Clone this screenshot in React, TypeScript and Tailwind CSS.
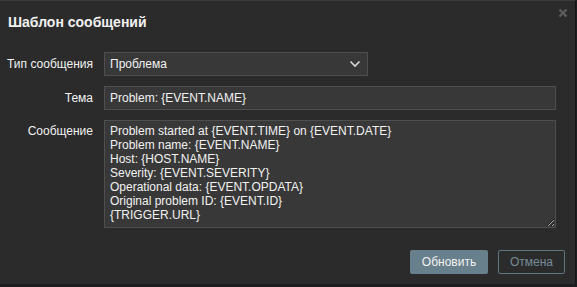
import React, { useState } from "react";

const message = `Problem started at {EVENT.TIME} on {EVENT.DATE}
Problem name: {EVENT.NAME}
Host: {HOST.NAME}
Severity: {EVENT.SEVERITY}
Operational data: {EVENT.OPDATA}
Original problem ID: {EVENT.ID}
{TRIGGER.URL}`;

function Chevron() {
  return (
    <svg width="12" height="8" viewBox="0 0 12 8" className="text-[#d9d9d9]">
      <path d="M1.5 1.5 L6 6 L10.5 1.5" fill="none" stroke="currentColor" strokeWidth="1.6" />
    </svg>
  );
}

export default function App() {
  const [subject, setSubject] = useState("Problem: {EVENT.NAME}");
  const [body, setBody] = useState(message);

  return (
    <div className="h-[287px] w-[577px] overflow-hidden bg-[#1b1d1f] font-['Liberation_Sans',Arial,sans-serif] text-[12px] text-[#f2f2f2]">
      <div className="relative flex h-[284px] w-[576px] flex-col border-r border-t border-[#3a3a3a] border-r-[#151515] bg-[#2b2b2b]">
        <button className="absolute right-[7px] top-[7px] text-[#5c5c5c]">
          <svg width="10" height="10" viewBox="0 0 10 10">
            <path d="M1.5 1.5 L8.5 8.5 M8.5 1.5 L1.5 8.5" stroke="currentColor" strokeWidth="2.4" />
          </svg>
        </button>

        <h2 className="pl-[8px] pt-[11px] text-[14px] font-bold leading-[20px] text-[#f2f2f2]">
          Шаблон сообщений
        </h2>

        <div className="mt-[20px] grid grid-cols-[93px_1fr] gap-x-[11px] gap-y-[10px] pr-[19px]">
          <label className="self-center text-right leading-[24px]">Тип сообщения</label>
          <div className="flex h-[24px] w-[264px] items-center justify-between border border-[#4f4f4f] bg-[#383838] pl-[5px] pr-[6px]">
            <span>Проблема</span>
            <Chevron />
          </div>

          <label className="self-center text-right leading-[24px]">Тема</label>
          <input
            value={subject}
            onChange={(e) => setSubject(e.target.value)}
            className="h-[24px] border border-[#4f4f4f] bg-[#383838] px-[5px] text-[12px] text-[#f2f2f2] outline-none"
          />

          <label className="pt-[4px] text-right leading-[14px]">Сообщение</label>
          <textarea
            value={body}
            onChange={(e) => setBody(e.target.value)}
            className="h-[108px] border border-[#4f4f4f] bg-[#383838] px-[5px] pt-[3px] text-[12px] leading-[14px] text-[#f2f2f2] outline-none [color-scheme:dark]"
          />
        </div>

        <div className="mt-[22px] flex justify-end gap-[10px] pr-[10px]">
          <button className="h-[24px] w-[78px] rounded-[2px] bg-[#687f8c] text-[12px] text-[#f2f2f2]">
            Обновить
          </button>
          <button className="h-[24px] w-[67px] rounded-[2px] border border-[#5f7581] text-[12px] text-[#768b97]">
            Отмена
          </button>
        </div>
      </div>
    </div>
  );
}
